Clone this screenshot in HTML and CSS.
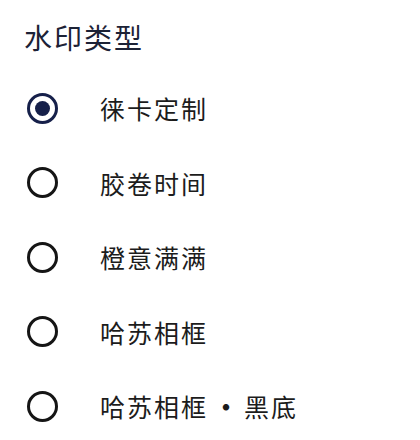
FILE: index.html
```html
<!DOCTYPE html>
<html lang="zh-CN">
<head>
    <meta charset="UTF-8">
    <meta name="viewport" content="width=device-width, initial-scale=1.0">
    <title>水印类型</title>
    <link rel="stylesheet" href="styles.css">
</head>
<body>
    <!-- Watermark type picker -->
    <div class="panel">
        <h2 class="panel-title">水印类型</h2>
        <ul class="radio-list">
            <li class="radio-item checked"><span class="radio"></span><span class="label">徕卡定制</span></li>
            <li class="radio-item"><span class="radio"></span><span class="label">胶卷时间</span></li>
            <li class="radio-item"><span class="radio"></span><span class="label">橙意满满</span></li>
            <li class="radio-item"><span class="radio"></span><span class="label">哈苏相框</span></li>
            <li class="radio-item"><span class="radio"></span><span class="label">哈苏相框<span class="dot">•</span>黑底</span></li>
        </ul>
    </div>
</body>
</html>
```

FILE: styles.css
```css
* {
    margin: 0;
    padding: 0;
    box-sizing: border-box;
}

body {
    background-color: #fff;
    font-family: "Noto Sans CJK SC", "Noto Sans", sans-serif;
}

.panel {
    padding: 19px 0 0 24px;
}

.panel-title {
    font-size: 28px;
    line-height: 36px;
    font-weight: 400;
    letter-spacing: 2px;
    color: #1c2236;
}

.radio-list {
    list-style: none;
    margin-top: 16px;
}

.radio-item {
    display: flex;
    align-items: center;
    height: 74.5px;
    padding-left: 3px;
    gap: 42px;
}

.radio {
    width: 31px;
    height: 31px;
    border: 3px solid #151515;
    border-radius: 50%;
    display: flex;
    align-items: center;
    justify-content: center;
    flex-shrink: 0;
}

.radio-item.checked .radio {
    border-color: #16204a;
}

.radio-item.checked .radio::after {
    content: "";
    width: 15px;
    height: 15px;
    border-radius: 50%;
    background-color: #16204a;
}

.label {
    font-size: 25px;
    line-height: 32px;
    letter-spacing: 2px;
    color: #1c1c1c;
}

.dot {
    display: inline-block;
    width: 36px;
    letter-spacing: 0;
    text-align: center;
    font-weight: 700;
}
```
